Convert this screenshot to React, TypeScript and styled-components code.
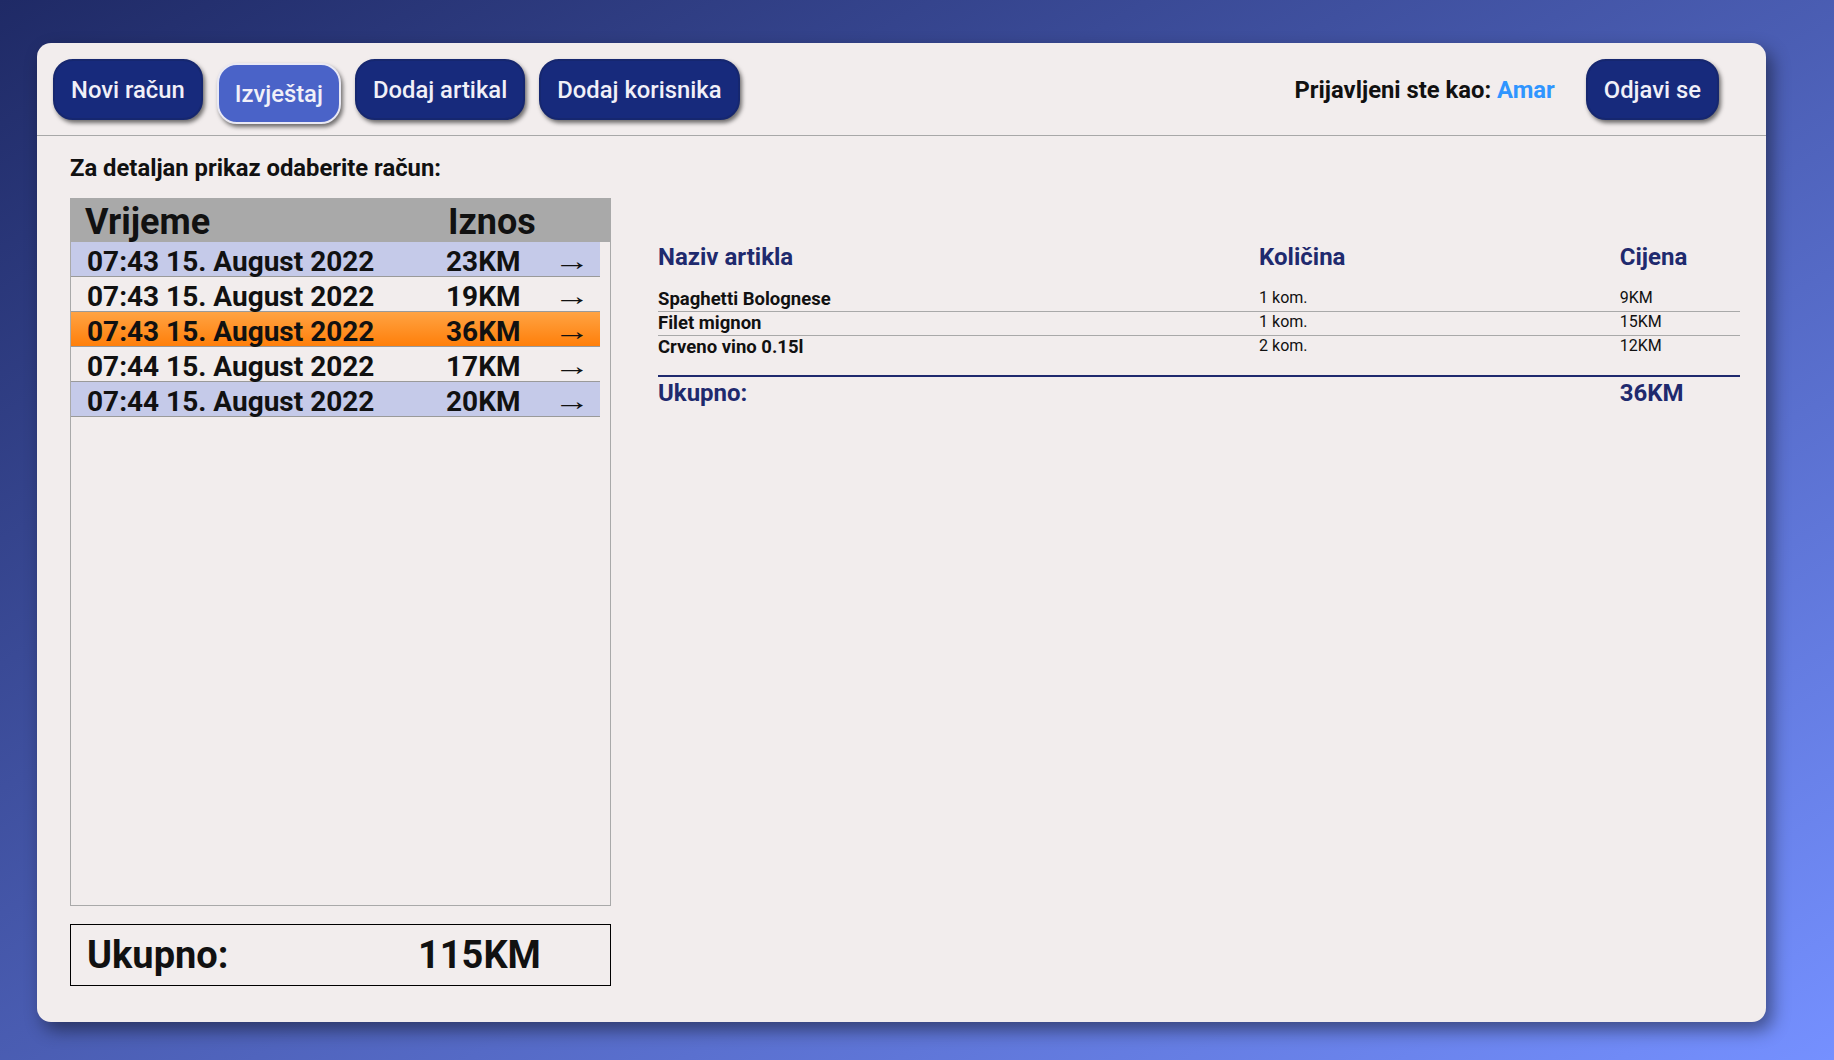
import React from 'react';
import styled, { createGlobalStyle } from 'styled-components';

const GlobalStyle = createGlobalStyle`
  html, body {
    margin: 0;
    padding: 0;
  }
  body {
    font-family: Roboto, 'Liberation Sans', sans-serif;
    background: linear-gradient(to bottom right, #1f2a66, #7590ff);
    min-height: 100vh;
  }
  * {
    box-sizing: border-box;
  }
`;

const Page = styled.div`
  height: 100vh;
  padding: 43px 68px 38px 37px;
  display: flex;
`;

const Card = styled.div`
  flex: 1;
  display: flex;
  flex-direction: column;
  background: #f2eded;
  border-radius: 14px;
  box-shadow: 6px 8px 18px rgba(0, 0, 0, 0.45);
  overflow: hidden;
`;

const Header = styled.div`
  display: flex;
  align-items: center;
  padding: 16px 47px 15px 16px;
  border-bottom: 1px solid #a8a8a8;
`;

const NavGroup = styled.div`
  display: flex;
  gap: 14px;
`;

const NavButton = styled.button<{ $active?: boolean }>`
  height: 61px;
  padding: 0 16px;
  border-radius: 20px;
  border: 2px solid ${(p) => (p.$active ? '#e9e9f4' : '#16276f')};
  background: ${(p) => (p.$active ? '#4a63c8' : '#172a7c')};
  color: #f1f0f8;
  font-family: Roboto, 'Liberation Sans', sans-serif;
  font-weight: 500;
  font-size: 23.8px;
  box-shadow: 2px 3px 4px rgba(0, 0, 0, 0.55);
  transform: ${(p) => (p.$active ? 'translateY(4px)' : 'none')};
  cursor: pointer;
`;

const UserInfo = styled.div`
  margin-left: auto;
  margin-right: 31px;
  font-size: 23.8px;
  font-weight: 700;
  color: #111;
`;

const UserName = styled.span`
  color: #2f95ff;
`;

const Content = styled.div`
  flex: 1;
  display: flex;
  padding: 18px 26px 36px 33px;
  min-height: 0;
`;

const LeftPanel = styled.div`
  width: 541px;
  display: flex;
  flex-direction: column;
`;

const Hint = styled.div`
  font-size: 23.8px;
  font-weight: 700;
  color: #111;
  line-height: 28px;
  margin-bottom: 16px;
`;

const ReceiptBox = styled.div`
  flex: 1;
  border: 1px solid #a9a9a9;
  display: flex;
  flex-direction: column;
`;

const ReceiptHead = styled.div`
  display: grid;
  grid-template-columns: 363px 1fr;
  align-items: center;
  height: 43px;
  padding: 2px 0 0 14px;
  background: #a9a9a9;
  font-size: 36px;
  font-weight: 700;
  color: #111;
`;

const ReceiptList = styled.div`
  padding-right: 10px;
`;

const ReceiptRow = styled.div<{ $tone: 'blue' | 'plain' | 'active' }>`
  display: grid;
  grid-template-columns: 359px 114px 1fr;
  align-items: center;
  height: 35px;
  padding: 3px 0 0 16px;
  border-bottom: 1px solid #9a9a9a;
  font-size: 28px;
  font-weight: 700;
  color: #111;
  background: ${(p) =>
    p.$tone === 'active'
      ? 'linear-gradient(to bottom, #ffa343, #ff7f0a)'
      : p.$tone === 'blue'
      ? '#c5cae9'
      : 'transparent'};
  cursor: pointer;
`;

const Arrow = styled.span`
  font-family: 'Liberation Serif', 'DejaVu Serif', serif;
  font-weight: 400;
  font-size: 26px;
  line-height: 1;
  transform: scaleX(1.4);
  transform-origin: left center;
  position: relative;
  top: 0;
  left: -6px;
`;

const TotalBox = styled.div`
  margin-top: 18px;
  height: 62px;
  border: 1px solid #000;
  display: grid;
  grid-template-columns: 331px 1fr;
  align-items: center;
  padding-left: 16px;
  font-size: 38px;
  font-weight: 700;
  color: #111;
`;

const RightPanel = styled.div`
  flex: 1;
  margin-left: 47px;
  padding-top: 89px;
`;

const ItemGrid = styled.div`
  display: grid;
  grid-template-columns: 5fr 3fr 1fr;
`;

const ItemHead = styled(ItemGrid)`
  height: 27px;
  align-items: center;
  font-size: 24px;
  font-weight: 700;
  color: #1f2a6e;
  margin-bottom: 18px;
`;

const ItemRow = styled(ItemGrid)<{ $last?: boolean }>`
  height: 24px;
  border-bottom: ${(p) => (p.$last ? 'none' : '1px solid #a9a9a9')};
  color: #111;
`;

const ItemName = styled.div`
  font-size: 18.5px;
  font-weight: 700;
  line-height: 22px;
`;

const ItemValue = styled.div`
  font-size: 16px;
  line-height: 20px;
`;

const ItemTotal = styled(ItemGrid)`
  margin-top: 15px;
  border-top: 2px solid #1f2a6e;
  padding-top: 2px;
  font-size: 24px;
  font-weight: 700;
  color: #1f2a6e;
  line-height: 28px;
`;

const receipts = [
  { time: '07:43 15. August 2022', amount: '23KM' },
  { time: '07:43 15. August 2022', amount: '19KM' },
  { time: '07:43 15. August 2022', amount: '36KM' },
  { time: '07:44 15. August 2022', amount: '17KM' },
  { time: '07:44 15. August 2022', amount: '20KM' },
];

const items = [
  { name: 'Spaghetti Bolognese', qty: '1 kom.', price: '9KM' },
  { name: 'Filet mignon', qty: '1 kom.', price: '15KM' },
  { name: 'Crveno vino 0.15l', qty: '2 kom.', price: '12KM' },
];

const selected = 2;

export default function App() {
  return (
    <>
      <GlobalStyle />
      <Page>
        <Card>
          <Header>
            <NavGroup>
              <NavButton>Novi račun</NavButton>
              <NavButton $active>Izvještaj</NavButton>
              <NavButton>Dodaj artikal</NavButton>
              <NavButton>Dodaj korisnika</NavButton>
            </NavGroup>
            <UserInfo>
              Prijavljeni ste kao: <UserName>Amar</UserName>
            </UserInfo>
            <NavButton>Odjavi se</NavButton>
          </Header>
          <Content>
            <LeftPanel>
              <Hint>Za detaljan prikaz odaberite račun:</Hint>
              <ReceiptBox>
                <ReceiptHead>
                  <span>Vrijeme</span>
                  <span>Iznos</span>
                </ReceiptHead>
                <ReceiptList>
                  {receipts.map((r, i) => (
                    <ReceiptRow
                      key={i}
                      $tone={i === selected ? 'active' : i % 2 === 0 ? 'blue' : 'plain'}
                    >
                      <span>{r.time}</span>
                      <span>{r.amount}</span>
                      <Arrow>→</Arrow>
                    </ReceiptRow>
                  ))}
                </ReceiptList>
              </ReceiptBox>
              <TotalBox>
                <span>Ukupno:</span>
                <span>115KM</span>
              </TotalBox>
            </LeftPanel>
            <RightPanel>
              <ItemHead>
                <span>Naziv artikla</span>
                <span>Količina</span>
                <span>Cijena</span>
              </ItemHead>
              {items.map((it, i) => (
                <ItemRow key={i} $last={i === items.length - 1}>
                  <ItemName>{it.name}</ItemName>
                  <ItemValue>{it.qty}</ItemValue>
                  <ItemValue>{it.price}</ItemValue>
                </ItemRow>
              ))}
              <ItemTotal>
                <span>Ukupno:</span>
                <span />
                <span>36KM</span>
              </ItemTotal>
            </RightPanel>
          </Content>
        </Card>
      </Page>
    </>
  );
}
